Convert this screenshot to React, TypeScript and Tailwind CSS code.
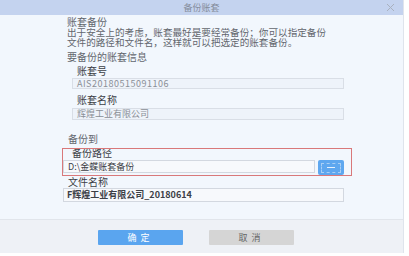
import React from "react";

const font = { fontFamily: '"Noto Sans CJK SC", "Noto Sans", sans-serif' };

export default function App() {
  return (
    <div className="w-[409px] h-[256px] bg-white overflow-hidden" style={font}>
      <div className="w-[404px] h-[253px] flex flex-col border-r border-[#dfe4ec] bg-[#f2f7fd]">
        {/* Title bar */}
        <div className="relative h-[15px] bg-[#c4d3ef] flex items-center justify-center">
          <span className="text-[9px] leading-[15px] text-[#858d9c]">备份账套</span>
          <svg className="absolute right-[8px] top-[3px]" width="9" height="9" viewBox="0 0 9 9">
            <path d="M1 1L8 8M8 1L1 8" stroke="#a9b1bf" strokeWidth="1" />
          </svg>
        </div>

        {/* Body */}
        <div className="flex-1 pl-[67px] pt-[2px] text-[10px] leading-[10px] text-[#62666d]">
          <div className="h-[10px]">账套备份</div>
          <div className="h-[10px] text-[9.6px]">出于安全上的考虑，账套最好是要经常备份；你可以指定备份</div>
          <div className="h-[10px] text-[9.6px]">文件的路径和文件名，这样就可以把选定的账套备份。</div>

          <div className="mt-[5px]">要备份的账套信息</div>
          <div className="mt-[4px] pl-[10px] text-[#3c4046]">账套号</div>
          <div className="mt-[2px] ml-[5px] w-[272px] h-[11px] border border-[#d9dee6] bg-[#eef3fa] pl-[4px] text-[9px] leading-[9px] text-[#8a8f96] tracking-[0.5px]">
            AIS20180515091106
          </div>
          <div className="mt-[6px] pl-[10px] text-[#3c4046]">账套名称</div>
          <div className="mt-[3px] ml-[5px] w-[272px] h-[12px] border border-[#d9dee6] bg-[#eef3fa] pl-[4px] text-[9px] leading-[10px] text-[#8a8f96]">
            辉煌工业有限公司
          </div>

          <div className="mt-[14px] pl-[1px]">备份到</div>
          <div className="relative mt-[4px] h-[28px]">
            <div className="absolute left-[-5px] top-0 w-[290px] h-[28px] border border-[#d9787a] pointer-events-none" />
            <div className="pl-[5px] leading-[9px] text-[#3c4046]">备份路径</div>
            <div className="mt-[3px] ml-[-4px] flex gap-[3px]">
              <div className="w-[252px] h-[13px] border border-[#d3d8e0] bg-[#f7f9fc] pl-[4px] text-[9px] leading-[11px] text-[#3c4046]">
                D:\金蝶账套备份
              </div>
              <div className="w-[26px] h-[15px] rounded-[2px] bg-[#5ea7ef] flex items-center justify-center">
                <div className="w-[20px] h-[10px] border border-dashed border-[#a9cff5] flex items-center justify-center">
                  <div className="w-[8px] h-[1px] bg-[#e6f1fd]" />
                </div>
              </div>
            </div>
          </div>
          <div className="mt-[1px] pl-[1px] text-[#3c4046]">文件名称</div>
          <div className="mt-[1px] ml-[-4px] w-[281px] h-[14px] border border-[#d3d8e0] bg-[#f7f9fc] pl-[3px] text-[9px] leading-[12px] font-bold text-[#3c4046]">
            F辉煌工业有限公司_20180614
          </div>
        </div>

        {/* Footer */}
        <div className="h-[34px] border-t border-[#e1e5eb] bg-[#eef1f6] flex items-start pt-[10px] pl-[98px] gap-[26px]">
          <button className="w-[85px] h-[15px] bg-[#5aa5ef] rounded-[1px] text-[9px] leading-[15px] text-white tracking-[4px]">
            确定
          </button>
          <button className="w-[85px] h-[15px] bg-[#d5d5d5] rounded-[1px] text-[9px] leading-[15px] text-[#666] tracking-[4px]">
            取消
          </button>
        </div>
      </div>
    </div>
  );
}
